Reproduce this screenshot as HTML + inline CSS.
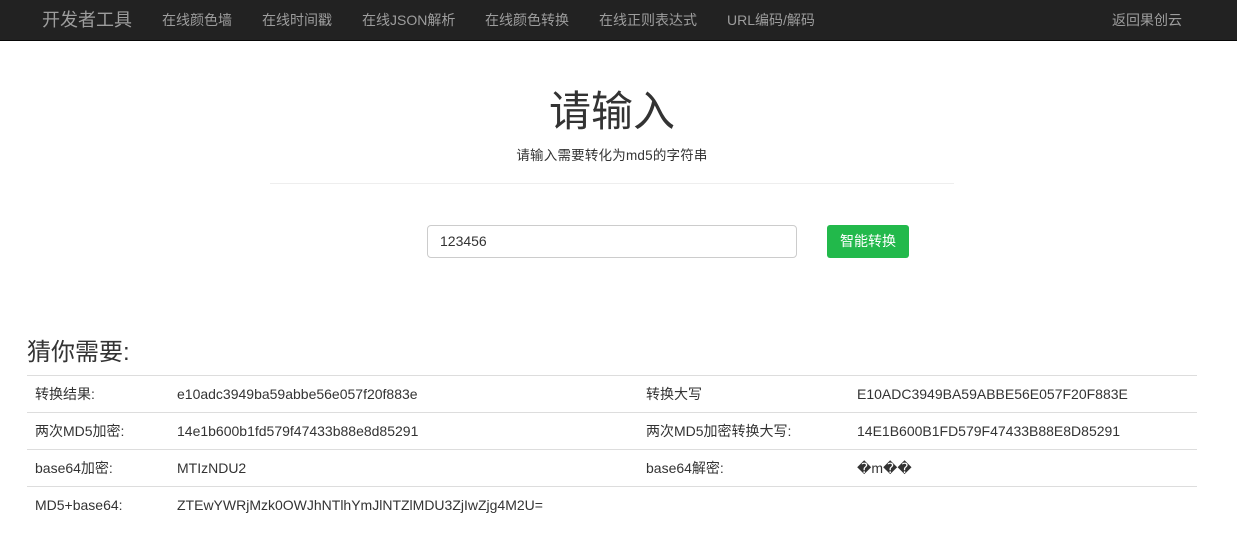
<!DOCTYPE html>
<html><head><meta charset="utf-8"><style>
body{margin:0;width:1237px;height:559px;background:#fff;font-family:"Liberation Sans","Noto Sans CJK SC",sans-serif;color:#333;overflow:hidden;position:relative}
.nav{position:absolute;left:0;top:0;width:1237px;height:40px;background:#222;border-bottom:1px solid #080808}
.nav span{position:absolute;top:0;line-height:40px;color:#9d9d9d;font-size:14px}
.brand{font-size:18px!important}
.abs{position:absolute}
table{position:absolute;left:27px;top:375px;width:1170px;border-collapse:collapse;font-size:14px}
td{border-top:1px solid #ddd;height:36px;padding:0 0 0 8px;vertical-align:middle}
</style></head><body>
<div class="nav">
<span class="brand" style="left:42px">开发者工具</span>
<span style="left:162px">在线颜色墙</span>
<span style="left:262px">在线时间戳</span>
<span style="left:362px">在线JSON解析</span>
<span style="left:485px">在线颜色转换</span>
<span style="left:599px">在线正则表达式</span>
<span style="left:727px">URL编码/解码</span>
<span style="left:1112px">返回果创云</span>
</div>
<div class="abs" style="left:0;width:1224px;top:86px;text-align:center;font-size:42px;line-height:52px">请输入</div>
<div class="abs" style="left:0;width:1224px;top:147px;text-align:center;font-size:13.5px;line-height:18px;letter-spacing:0.2px">请输入需要转化为md5的字符串</div>
<div class="abs" style="left:270px;top:183px;width:684px;border-top:1px solid #eee"></div>
<div class="abs" style="left:427px;top:225px;width:368px;height:31px;border:1px solid #ccc;border-radius:4px;font-size:14px;line-height:31px;box-sizing:content-box"><span style="padding-left:12px">123456</span></div>
<div class="abs" style="left:827px;top:225px;width:82px;height:33px;background:#22b94b;border-radius:3px;color:#fff;font-size:14px;line-height:33px;text-align:center">智能转换</div>
<div class="abs" style="left:27px;top:338px;font-size:24px;line-height:30px">猜你需要:</div>
<table>
<tr><td style="width:134px">转换结果:</td><td style="width:461px">e10adc3949ba59abbe56e057f20f883e</td><td style="width:203px">转换大写</td><td>E10ADC3949BA59ABBE56E057F20F883E</td></tr>
<tr><td>两次MD5加密:</td><td>14e1b600b1fd579f47433b88e8d85291</td><td>两次MD5加密转换大写:</td><td>14E1B600B1FD579F47433B88E8D85291</td></tr>
<tr><td>base64加密:</td><td>MTIzNDU2</td><td>base64解密:</td><td>�m��</td></tr>
<tr><td>MD5+base64:</td><td>ZTEwYWRjMzk0OWJhNTlhYmJlNTZlMDU3ZjIwZjg4M2U=</td><td></td><td></td></tr>
</table>
</body></html>
